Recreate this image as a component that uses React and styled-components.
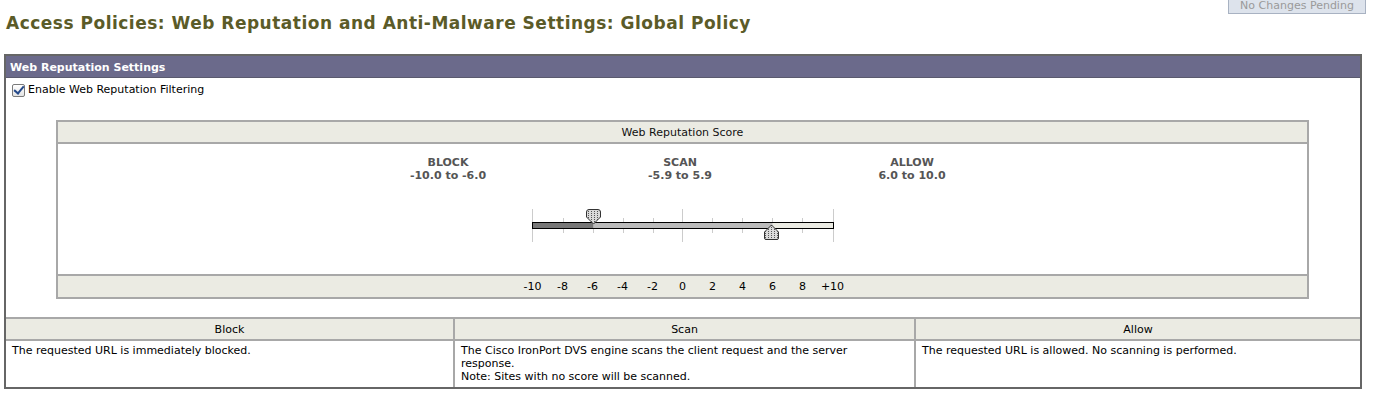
import React from "react";
import styled, { createGlobalStyle } from "styled-components";

const GlobalStyle = createGlobalStyle`
  body {
    margin: 0;
    background: #fff;
    font-family: "DejaVu Sans", Verdana, sans-serif;
    font-size: 11px;
    color: #000;
  }
`;

const TopBar = styled.div`
  display: flex;
  justify-content: space-between;
  align-items: flex-start;
  height: 54px;
  overflow: hidden;
`;

const Title = styled.h1`
  margin: 13px 0 0 6px;
  font-size: 17px;
  line-height: 20px;
  letter-spacing: 0.5px;
  font-weight: bold;
  color: #5b5b28;
`;

const PendingButton = styled.button`
  margin: -5px 11px 0 0;
  width: 138px;
  height: 19px;
  padding: 3px 0 0;
  line-height: 14px;
  font-family: inherit;
  font-size: 11px;
  color: #9a9a9a;
  background: #dde3ec;
  border: 1px solid #a8b2c2;
`;

const Panel = styled.div`
  margin: 0 15px 0 4px;
  border: 2px solid #666;
`;

const PanelHeader = styled.div`
  height: 22px;
  box-sizing: border-box;
  padding: 2px 4px 0;
  line-height: 20px;
  font-weight: bold;
  color: #fff;
  background: #6b6a8b;
  border-bottom: 1px solid #5a5a6e;
`;

const CheckRow = styled.label`
  display: flex;
  align-items: center;
  gap: 3px;
  padding: 5px 6px 0;
  line-height: 14px;
`;

const Check = styled.input`
  appearance: none;
  position: relative;
  width: 13px;
  height: 13px;
  margin: 0;
  border: 1px solid #7a7a7a;
  border-radius: 2px;
  background: linear-gradient(#fff, #e4e4e4);

  &:checked::after {
    content: "";
    position: absolute;
    left: 3px;
    top: -1px;
    width: 4px;
    height: 8px;
    border: solid #24498a;
    border-width: 0 2px 2px 0;
    transform: rotate(40deg);
  }
`;

const ScoreBox = styled.div`
  margin: 23px 51px 0 50px;
  border: 2px solid #a8a8a8;
`;

const Band = styled.div`
  height: 20px;
  line-height: 21px;
  text-align: center;
  background: #ebebe3;
  color: #111;
`;

const ScoreBody = styled.div`
  border-top: 2px solid #a8a8a8;
  border-bottom: 2px solid #a8a8a8;
  padding: 12px 0 30px;
  display: flex;
  flex-direction: column;
  align-items: center;
`;

const Ranges = styled.div`
  display: grid;
  grid-template-columns: repeat(3, 232px);
  margin-right: 5px;
`;

const Range = styled.div`
  text-align: center;
  font-weight: bold;
  line-height: 13px;
  color: #555;
`;

const Slider = styled.svg`
  display: block;
  margin-top: 25px;
`;

const Numbers = styled.div`
  display: flex;
  justify-content: center;
  height: 21px;
  line-height: 22px;
  background: #ebebe3;
`;

const Num = styled.span`
  width: 30px;
  text-align: center;
`;

const Table = styled.div`
  margin-top: 18px;
  display: grid;
  grid-template-columns: 447px 461px 1fr;
  border-top: 2px solid #a8a8a8;
`;

const HeadCell = styled.div`
  height: 20px;
  line-height: 21px;
  text-align: center;
  background: #ebebe3;
  border-bottom: 2px solid #a8a8a8;
  border-left: ${(p) => (p.$first ? "none" : "2px solid #a8a8a8")};
`;

const Cell = styled.div`
  padding: 3px 6px 4px;
  line-height: 13px;
  border-left: ${(p) => (p.$first ? "none" : "2px solid #a8a8a8")};
`;

const ranges = [
  ["BLOCK", "-10.0 to -6.0"],
  ["SCAN", "-5.9 to 5.9"],
  ["ALLOW", "6.0 to 10.0"],
];

const ticks = ["-10", "-8", "-6", "-4", "-2", "0", "2", "4", "6", "8", "+10"];

const ScoreSlider = () => {
  const tall = [4.5, 154.5, 305.5];
  const short = [35, 65, 95, 125, 184, 214, 244, 274];
  return (
    <Slider width="310" height="37" viewBox="0 0 310 37">
      <defs>
        <pattern id="dots" width="3" height="2" patternUnits="userSpaceOnUse">
          <rect width="3" height="2" fill="#dadada" />
          <rect width="1" height="1" fill="#555" />
        </pattern>
      </defs>
      {tall.map((x) => (
        <line key={x} x1={x} x2={x} y1="2" y2="35" stroke="#ccc" />
      ))}
      {short.map((x) => (
        <line key={x} x1={x + 0.5} x2={x + 0.5} y1="11" y2="26" stroke="#ccc" />
      ))}
      <rect x="4.5" y="15.5" width="61" height="6" fill="#777" />
      <rect x="65.5" y="15.5" width="179" height="6" fill="#bbb" />
      <rect x="244.5" y="15.5" width="61" height="6" fill="#ebebe3" />
      <rect x="4.5" y="15.5" width="301" height="6" fill="none" stroke="#000" />
      <path
        d="M58.5 5 Q58.5 2.5 61 2.5 L70 2.5 Q72.5 2.5 72.5 5 L72.5 10 L65.5 17 L58.5 10 Z"
        fill="url(#dots)"
        stroke="#333"
      />
      <path
        d="M236.5 31 L236.5 25 L243.5 18 L250.5 25 L250.5 31 Q250.5 32.5 249 32.5 L238 32.5 Q236.5 32.5 236.5 31 Z"
        fill="url(#dots)"
        stroke="#333"
      />
    </Slider>
  );
};

const App = () => (
  <>
    <GlobalStyle />
    <TopBar>
      <Title>Access Policies: Web Reputation and Anti-Malware Settings: Global Policy</Title>
      <PendingButton>No Changes Pending</PendingButton>
    </TopBar>
    <Panel>
      <PanelHeader>Web Reputation Settings</PanelHeader>
      <CheckRow>
        <Check type="checkbox" defaultChecked />
        Enable Web Reputation Filtering
      </CheckRow>
      <ScoreBox>
        <Band>Web Reputation Score</Band>
        <ScoreBody>
          <Ranges>
            {ranges.map(([name, span]) => (
              <Range key={name}>
                {name}
                <br />
                {span}
              </Range>
            ))}
          </Ranges>
          <ScoreSlider />
        </ScoreBody>
        <Numbers>
          {ticks.map((t) => (
            <Num key={t}>{t}</Num>
          ))}
        </Numbers>
      </ScoreBox>
      <Table>
        <HeadCell $first>Block</HeadCell>
        <HeadCell>Scan</HeadCell>
        <HeadCell>Allow</HeadCell>
        <Cell $first>The requested URL is immediately blocked.</Cell>
        <Cell>
          The Cisco IronPort DVS engine scans the client request and the server
          <br />
          response.
          <br />
          Note: Sites with no score will be scanned.
        </Cell>
        <Cell>The requested URL is allowed. No scanning is performed.</Cell>
      </Table>
    </Panel>
  </>
);

export default App;
